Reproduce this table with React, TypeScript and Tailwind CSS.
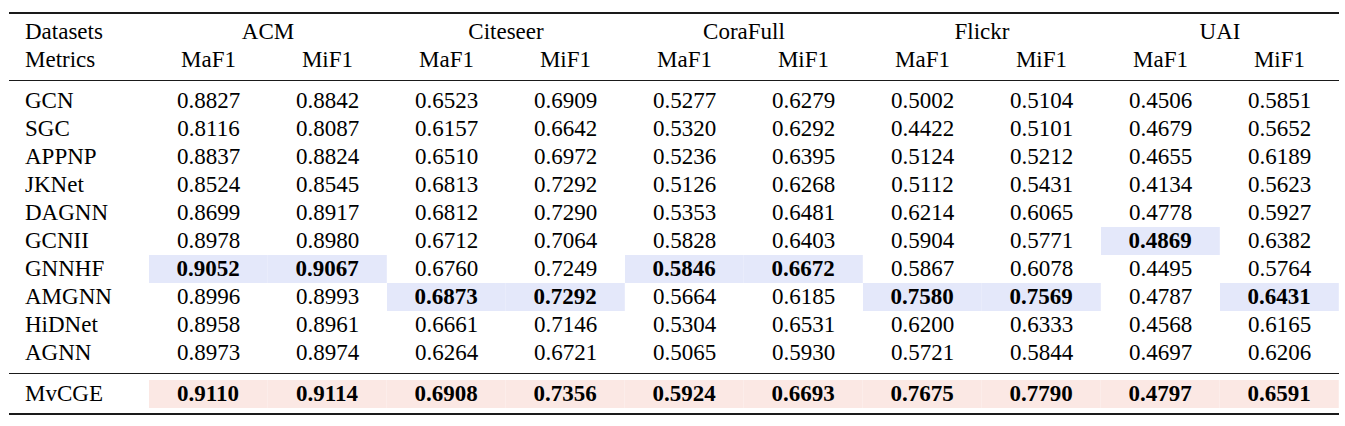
import React from "react";

const datasets = ["ACM", "Citeseer", "CoraFull", "Flickr", "UAI"];

type Row = { name: string; vals: string[]; hl: number[] };

const rows: Row[] = [
  { name: "GCN", vals: ["0.8827", "0.8842", "0.6523", "0.6909", "0.5277", "0.6279", "0.5002", "0.5104", "0.4506", "0.5851"], hl: [] },
  { name: "SGC", vals: ["0.8116", "0.8087", "0.6157", "0.6642", "0.5320", "0.6292", "0.4422", "0.5101", "0.4679", "0.5652"], hl: [] },
  { name: "APPNP", vals: ["0.8837", "0.8824", "0.6510", "0.6972", "0.5236", "0.6395", "0.5124", "0.5212", "0.4655", "0.6189"], hl: [] },
  { name: "JKNet", vals: ["0.8524", "0.8545", "0.6813", "0.7292", "0.5126", "0.6268", "0.5112", "0.5431", "0.4134", "0.5623"], hl: [] },
  { name: "DAGNN", vals: ["0.8699", "0.8917", "0.6812", "0.7290", "0.5353", "0.6481", "0.6214", "0.6065", "0.4778", "0.5927"], hl: [] },
  { name: "GCNII", vals: ["0.8978", "0.8980", "0.6712", "0.7064", "0.5828", "0.6403", "0.5904", "0.5771", "0.4869", "0.6382"], hl: [8] },
  { name: "GNNHF", vals: ["0.9052", "0.9067", "0.6760", "0.7249", "0.5846", "0.6672", "0.5867", "0.6078", "0.4495", "0.5764"], hl: [0, 1, 4, 5] },
  { name: "AMGNN", vals: ["0.8996", "0.8993", "0.6873", "0.7292", "0.5664", "0.6185", "0.7580", "0.7569", "0.4787", "0.6431"], hl: [2, 3, 6, 7, 9] },
  { name: "HiDNet", vals: ["0.8958", "0.8961", "0.6661", "0.7146", "0.5304", "0.6531", "0.6200", "0.6333", "0.4568", "0.6165"], hl: [] },
  { name: "AGNN", vals: ["0.8973", "0.8974", "0.6264", "0.6721", "0.5065", "0.5930", "0.5721", "0.5844", "0.4697", "0.6206"], hl: [] },
];

const ours = ["0.9110", "0.9114", "0.6908", "0.7356", "0.5924", "0.6693", "0.7675", "0.7790", "0.4797", "0.6591"];

const gridCls = "grid grid-cols-[140px_repeat(10,119px)]";

export default function App() {
  return (
    <div
      className="w-[1345px] h-[426px] bg-white pt-[12px] pl-[9px] text-black text-[23px] leading-[28px]"
      style={{ fontFamily: '"Liberation Serif", "Times New Roman", serif' }}
    >
      <div className="w-[1330px]">
        <div className="h-[2px] bg-[#1a1a1a]" />
        <div className="pt-[4px]">
          <div className={`${gridCls} h-[28px]`}>
            <div className="pl-[16px]">Datasets</div>
            {datasets.map((d) => (
              <div key={d} className="col-span-2 text-center">
                {d}
              </div>
            ))}
          </div>
          <div className={`${gridCls} h-[28px]`}>
            <div className="pl-[16px]">Metrics</div>
            {datasets.map((d) => (
              <React.Fragment key={d}>
                <div className="text-center">MaF1</div>
                <div className="text-center">MiF1</div>
              </React.Fragment>
            ))}
          </div>
        </div>
        <div className="mt-[6px] h-[1px] bg-[#1a1a1a]" />
        <div className="pt-[6px]">
          {rows.map((r) => (
            <div key={r.name} className={`${gridCls} h-[28px]`}>
              <div className="pl-[16px]">{r.name}</div>
              {r.vals.map((v, i) => {
                const h = r.hl.includes(i);
                return (
                  <div
                    key={i}
                    className={
                      h
                        ? "text-center bg-[#e4e8fa] font-bold border-r border-[#e9ecfb]"
                        : "text-center"
                    }
                  >
                    {v}
                  </div>
                );
              })}
            </div>
          ))}
        </div>
        <div className="mt-[6px] h-[1px] bg-[#1a1a1a]" />
        <div className="pt-[6px]">
          <div className={`${gridCls} h-[28px]`}>
            <div className="pl-[16px]">MvCGE</div>
            {ours.map((v, i) => (
              <div key={i} className="text-center bg-[#fbe8e4] font-bold border-r border-[#fcedea]">
                {v}
              </div>
            ))}
          </div>
        </div>
        <div className="mt-[5px] h-[2px] bg-[#1a1a1a]" />
      </div>
    </div>
  );
}
